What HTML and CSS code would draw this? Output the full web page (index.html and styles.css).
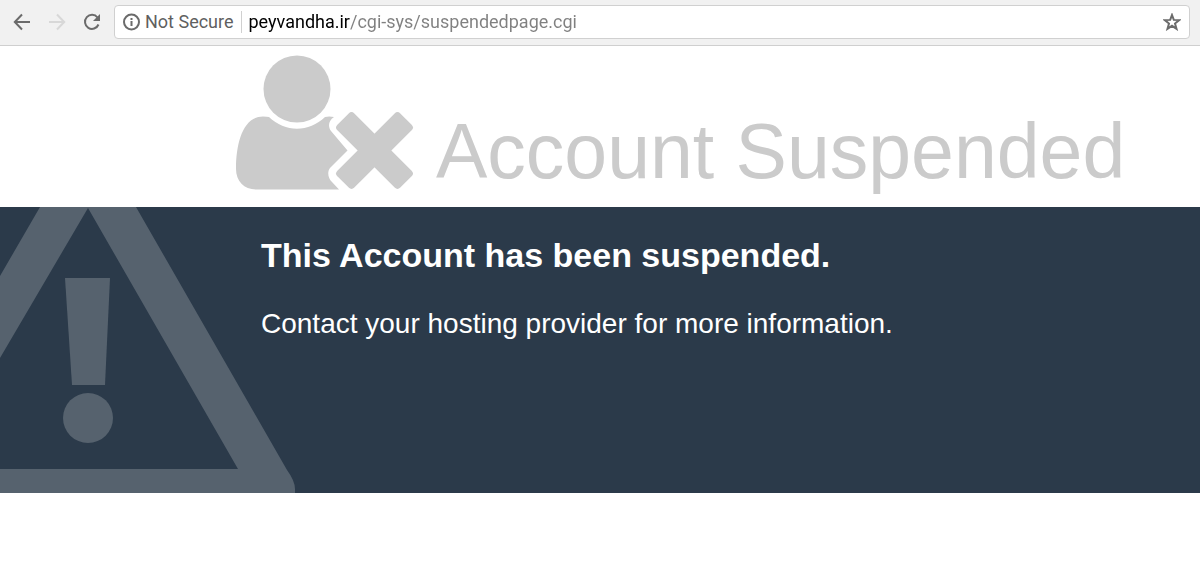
FILE: index.html
```html
<!DOCTYPE html>
<html lang="en">
<head>
  <meta charset="UTF-8">
  <meta name="viewport" content="width=device-width, initial-scale=1.0">
  <title>Account Suspended</title>
  <link rel="stylesheet" href="styles.css">
</head>
<body>
  <nav class="toolbar">
    <button type="button" class="nav-button" aria-label="Back">
      <svg width="18" height="18" viewBox="0 0 18 18"><path d="M17 9H2.500M9 1.500L1.800 9 9 16.500"/></svg>
    </button>
    <button type="button" class="nav-button" aria-label="Forward" disabled>
      <svg width="18" height="18" viewBox="0 0 18 18"><path d="M1 9h14.500M9 1.500L16.200 9 9 16.500"/></svg>
    </button>
    <button type="button" class="nav-button" aria-label="Reload">
      <svg width="18" height="18" viewBox="0 0 18 18"><path d="M14.500 4.500A7 7 0 1 0 15.500 11.500"/><path class="solid" d="M17 1v7h-7z"/></svg>
    </button>
    <form class="address">
      <button type="button" class="security">
        <svg width="18" height="18" viewBox="0 0 18 18"><circle cx="8.500" cy="9" r="7.500"/><path d="M8.500 8v5M8.500 5v2"/></svg>
        Not Secure
      </button>
      <input type="text" class="url" aria-label="Address" value="peyvandha.ir/cgi-sys/suspendedpage.cgi" spellcheck="false">
      <button type="button" class="bookmark" aria-label="Bookmark this page">
        <svg width="18" height="18" viewBox="0 0 18 18"><path d="M9 2l1.800 4.900 5.400.200-4.200 3.400 1.500 5.300L9 12.800l-4.500 3 1.500-5.300-4.200-3.400 5.400-.200z"/></svg>
      </button>
    </form>
  </nav>
  <header>
    <svg class="user-icon" width="178" height="135" viewBox="0 0 178 135">
      <circle cx="61" cy="34" r="33.500"/>
      <path d="M33 62C49 77.500 73 77.500 89 62Q93 61 98 62C92 66 92 72 95 76L111.500 95.500 94 113C91 117 92 123 96 127L103 134.500H20C8 134.500 0 126 0 114C0 88 7 61.500 27 61.500Q31 61.500 33 62z"/>
      <rect x="94" y="83.500" width="89" height="24" rx="4" transform="rotate(45 138.500 95.500)"/>
      <rect x="94" y="83.500" width="89" height="24" rx="4" transform="rotate(-45 138.500 95.500)"/>
    </svg>
    <h1>Account Suspended</h1>
  </header>
  <main>
    <svg class="warning" width="296" height="286" viewBox="0 0 296 286">
      <path fill-rule="evenodd" d="M40 0H136L287 263Q295 274 295 282V286H0V262H238L88 1 0 151V69z"/>
      <path d="M65 71h45l-5 107H72z"/>
      <circle cx="88" cy="211" r="25"/>
    </svg>
    <h2>This Account has been suspended.</h2>
    <p>Contact your hosting provider for more information.</p>
  </main>
</body>
</html>
```
FILE: styles.css
```css
body {
  margin: 0;
  background: #fff;
  font-family: "Liberation Sans", Arial, sans-serif;
}
button {
  display: flex;
  align-items: center;
  padding: 0;
  border: 0;
  background: none;
}
svg {
  flex: none;
}

/* browser toolbar */
.toolbar {
  display: flex;
  align-items: center;
  box-sizing: border-box;
  height: 46px;
  padding: 0 10px 1px 13px;
  background: #f1f1f1;
  border-bottom: 1px solid #cfcfcf;
}
.toolbar svg {
  fill: none;
  stroke: #6b6b6b;
  stroke-width: 2;
}
.nav-button {
  margin-right: 17px;
}
.nav-button:disabled svg {
  stroke: #d8d8d8;
}
.nav-button .solid {
  fill: #6b6b6b;
  stroke: none;
}
.address {
  display: flex;
  flex: 1;
  align-items: center;
  box-sizing: border-box;
  height: 34px;
  margin-left: -4px;
  padding: 0 8px;
  background: #fff;
  border: 1px solid #d0d0d0;
  border-radius: 4px;
}
.security,
.url {
  font: 18px/22px Roboto, sans-serif;
}
.security {
  gap: 4px;
  padding-right: 7px;
  border-right: 1px solid #d0d0d0;
  color: #5f5f5f;
}
/* the host is drawn darker than the path */
.url {
  flex: 1;
  min-width: 0;
  padding: 0 0 0 7px;
  border: 0;
  outline: 0;
  color: transparent;
  background: linear-gradient(to right, #000 108px, #808080 108px);
  -webkit-background-clip: text;
  background-clip: text;
}

header {
  display: flex;
  align-items: flex-end;
  gap: 22px;
  padding: 9px 20px 17px 236px;
  color: #cbcbcb;
}
.user-icon {
  fill: currentColor;
}
h1 {
  margin: 0;
  font-size: 77px;
  font-weight: 400;
  line-height: 78px;
  white-space: nowrap;
}

main {
  position: relative;
  box-sizing: border-box;
  min-height: 286px;
  padding: 28px 20px 20px 261px;
  background: #2b3a4a;
  color: #fff;
}
.warning {
  position: absolute;
  top: 0;
  left: 0;
  fill: #56626e;
}
h2 {
  position: relative;
  margin: 0 0 29px;
  font-size: 34px;
  line-height: 40px;
}
p {
  position: relative;
  margin: 0;
  font-size: 28px;
  line-height: 40px;
}
```
